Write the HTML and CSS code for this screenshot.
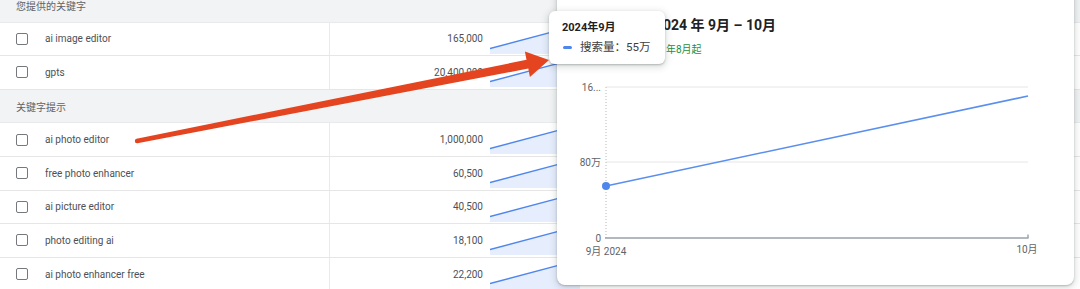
FILE: index.html
```html
<!DOCTYPE html>
<html lang="zh">
<head>
<meta charset="utf-8">
<title>关键字</title>
<link rel="stylesheet" href="styles.css">
</head>
<body>
<div class="page">
  <div class="table">
    <div class="group">您提供的关键字</div>
    <div class="row">
      <div class="cell-check"><span class="checkbox"></span></div>
      <div class="cell-kw">ai image editor</div>
      <div class="cell-num">165,000</div>
      <div class="cell-spark"><svg class="spark" viewBox="0 0 90 33" preserveAspectRatio="none"><polygon points="0,25.5 90,1.6 90,31 0,31" class="spark-fill"/><polyline points="0,25.5 90,1.6" class="spark-line"/></svg></div>
    </div>
    <div class="row">
      <div class="cell-check"><span class="checkbox"></span></div>
      <div class="cell-kw">gpts</div>
      <div class="cell-num">20,400,000</div>
      <div class="cell-spark"><svg class="spark" viewBox="0 0 90 33" preserveAspectRatio="none"><polygon points="0,25.5 90,1.6 90,31 0,31" class="spark-fill"/><polyline points="0,25.5 90,1.6" class="spark-line"/></svg></div>
    </div>
    <div class="group">关键字提示</div>
    <div class="row">
      <div class="cell-check"><span class="checkbox"></span></div>
      <div class="cell-kw">ai photo editor</div>
      <div class="cell-num">1,000,000</div>
      <div class="cell-spark"><svg class="spark" viewBox="0 0 90 33" preserveAspectRatio="none"><polygon points="0,25.5 90,1.6 90,31 0,31" class="spark-fill"/><polyline points="0,25.5 90,1.6" class="spark-line"/></svg></div>
    </div>
    <div class="row">
      <div class="cell-check"><span class="checkbox"></span></div>
      <div class="cell-kw">free photo enhancer</div>
      <div class="cell-num">60,500</div>
      <div class="cell-spark"><svg class="spark" viewBox="0 0 90 33" preserveAspectRatio="none"><polygon points="0,25.5 90,1.6 90,31 0,31" class="spark-fill"/><polyline points="0,25.5 90,1.6" class="spark-line"/></svg></div>
    </div>
    <div class="row">
      <div class="cell-check"><span class="checkbox"></span></div>
      <div class="cell-kw">ai picture editor</div>
      <div class="cell-num">40,500</div>
      <div class="cell-spark"><svg class="spark" viewBox="0 0 90 33" preserveAspectRatio="none"><polygon points="0,25.5 90,1.6 90,31 0,31" class="spark-fill"/><polyline points="0,25.5 90,1.6" class="spark-line"/></svg></div>
    </div>
    <div class="row">
      <div class="cell-check"><span class="checkbox"></span></div>
      <div class="cell-kw">photo editing ai</div>
      <div class="cell-num">18,100</div>
      <div class="cell-spark"><svg class="spark" viewBox="0 0 90 33" preserveAspectRatio="none"><polygon points="0,25.5 90,1.6 90,31 0,31" class="spark-fill"/><polyline points="0,25.5 90,1.6" class="spark-line"/></svg></div>
    </div>
    <div class="row">
      <div class="cell-check"><span class="checkbox"></span></div>
      <div class="cell-kw">ai photo enhancer free</div>
      <div class="cell-num">22,200</div>
      <div class="cell-spark"><svg class="spark" viewBox="0 0 90 33" preserveAspectRatio="none"><polygon points="0,25.5 90,1.6 90,31 0,31" class="spark-fill"/><polyline points="0,25.5 90,1.6" class="spark-line"/></svg></div>
    </div>
  </div>

  <div class="card">
    <div class="card-head">
      <div class="card-title">2024 年 9月 – 10月</div>
      <div class="card-sub">年8月起</div>
    </div>
    <svg class="chart" viewBox="0 0 517 200" width="517" height="200">
      <line x1="49" y1="17" x2="471" y2="17" class="grid"/>
      <line x1="49" y1="92" x2="471" y2="92" class="grid"/>
      <line x1="49" y1="17" x2="49" y2="168" class="vdots"/>
      <line x1="48" y1="168" x2="471.5" y2="168" class="axis"/>
      <line x1="471" y1="164.5" x2="471" y2="168" class="axis"/>
      <text x="44" y="20.5" class="ylab" text-anchor="end">16...</text>
      <text x="44" y="95.5" class="ylab" text-anchor="end">80万</text>
      <text x="44" y="171.5" class="ylab" text-anchor="end">0</text>
      <text x="49" y="184.5" class="xlab" text-anchor="middle">9月 2024</text>
      <text x="470" y="182.5" class="xlab" text-anchor="middle">10月</text>
      <line x1="49" y1="116" x2="471" y2="26" class="series"/>
      <circle cx="49" cy="116" r="4" class="dot"/>
    </svg>
    <div class="tooltip">
      <div class="tt-title">2024年9月</div>
      <div class="tt-row"><span class="tt-dash"></span><span>搜索量：55万</span></div>
    </div>
  </div>

  <svg class="arrow" viewBox="0 0 1080 289" width="1080" height="289">
    <polygon points="136.6,138.8 526.5,59.8 524.9,51.4 549,60 529.9,77 528.3,68.6 137.4,143.2" class="arrow-body"/>
    <circle cx="137" cy="141" r="2.2" class="arrow-body"/>
  </svg>
</div>
</body>
</html>
```
FILE: styles.css
```css
* { box-sizing: border-box; }
html, body { margin: 0; padding: 0; background: #fff; }
body {
  font-family: Roboto, "Noto Sans CJK SC", sans-serif;
  color: #3c4043;
}
.page {
  position: relative;
  width: 1080px;
  height: 289px;
  overflow: hidden;
}
.table {
  margin-top: -11px;
  display: flex;
  flex-direction: column;
}
.group {
  height: 33.6px;
  background: #f1f3f4;
  padding-left: 16px;
  display: flex;
  align-items: center;
  font-size: 10px;
  color: #5f6368;
  border-bottom: 1px solid #e8eaed;
}
.row {
  height: 33.6px;
  display: flex;
  align-items: stretch;
  border-bottom: 1px solid #e6e6e6;
  background: #fff;
  font-size: 10px;
}
.cell-check {
  width: 45px;
  padding-left: 16px;
  display: flex;
  align-items: center;
}
.checkbox {
  width: 12px;
  height: 12px;
  border: 1.5px solid #75787c;
  border-radius: 2px;
}
.cell-kw {
  width: 285px;
  display: flex;
  align-items: center;
  border-right: 1px solid #e8eaed;
  color: #4d5156;
}
.cell-num {
  width: 160px;
  padding-right: 7px;
  display: flex;
  align-items: center;
  justify-content: flex-end;
  color: #4d5156;
}
.cell-spark {
  width: 90px;
}
.spark {
  display: block;
  width: 90px;
  height: 33px;
}
.spark-fill { fill: #e6eefd; }
.spark-line { fill: none; stroke: #4f86ec; stroke-width: 1.4; }

.card {
  position: absolute;
  left: 557px;
  top: -20px;
  width: 517px;
  height: 305px;
  background: #fff;
  border-radius: 8px;
  box-shadow: 0 1px 2px rgba(60,64,67,.3), 0 2px 6px 2px rgba(60,64,67,.15);
  padding-top: 35px;
}
.card-head {
  padding-left: 98px;
}
.card-title {
  font-size: 14px;
  font-weight: 700;
  line-height: 20px;
  color: #202124;
}
.card-sub {
  margin-top: 8px;
  margin-left: 11px;
  font-size: 10px;
  line-height: 14px;
  color: #1e8e3e;
}
.chart {
  display: block;
  margin-top: 13px;
}
.grid { stroke: #e6e6e6; stroke-width: 1; }
.vdots { stroke: #b8b8b8; stroke-width: 1; stroke-dasharray: 1 2; }
.axis { stroke: #9aa0a6; stroke-width: 1.4; }
.ylab, .xlab {
  font-family: Roboto, "Noto Sans CJK SC", sans-serif;
  font-size: 10px;
  fill: #5f6368;
}
.series { stroke: #5a8fee; stroke-width: 1.6; fill: none; }
.dot { fill: #4f86ec; }

.tooltip {
  position: absolute;
  left: -8px;
  top: 31px;
  width: 116px;
  height: 53px;
  background: #fff;
  border-radius: 6px;
  box-shadow: 0 1px 2px rgba(60,64,67,.3), 0 2px 6px 2px rgba(60,64,67,.15);
  padding: 10px 0 0 13px;
}
.tt-title {
  font-size: 11px;
  font-weight: 700;
  line-height: 14px;
  color: #202124;
}
.tt-row {
  margin-top: 5px;
  display: flex;
  align-items: center;
  font-size: 11.5px;
  line-height: 14px;
  color: #3c4043;
}
.tt-dash {
  width: 9px;
  height: 3px;
  border-radius: 2px;
  background: #4f86ec;
  margin-left: 1px;
  margin-right: 8px;
}
.arrow {
  position: absolute;
  left: 0;
  top: 0;
  pointer-events: none;
}
.arrow-body { fill: #e4441f; }
```
